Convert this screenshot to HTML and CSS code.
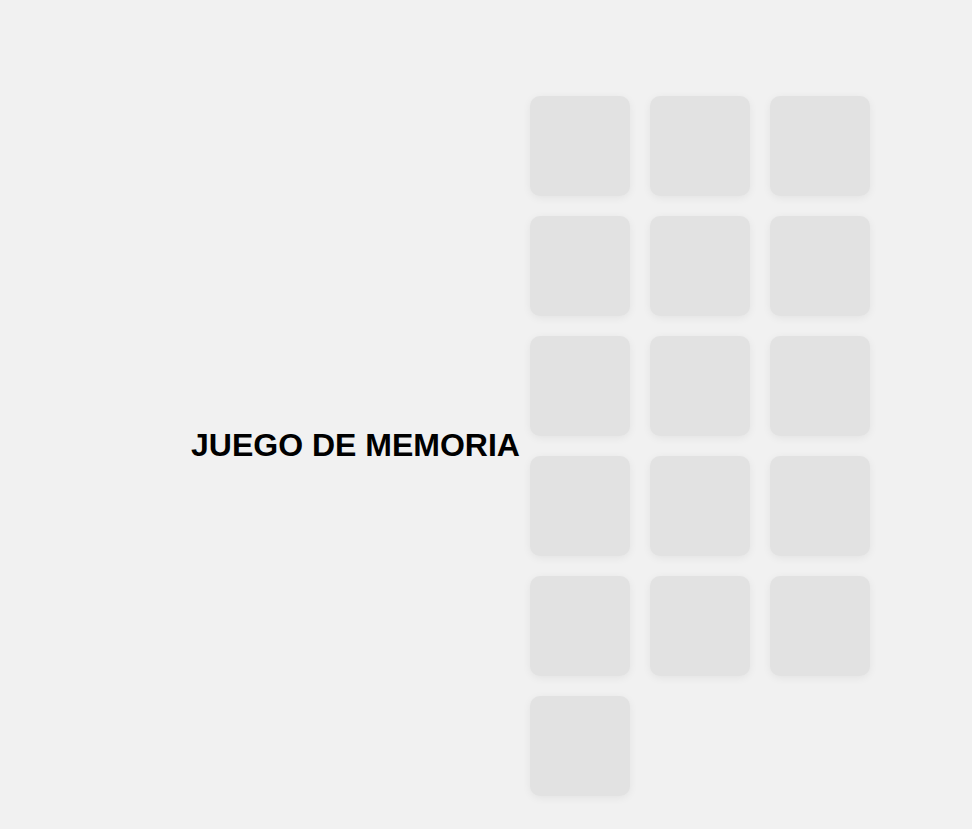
FILE: index.html
```html
<!DOCTYPE html>
<html lang="es">
<head>
<meta charset="utf-8">
<title>Juego de memoria</title>
<link rel="stylesheet" href="styles.css">
</head>
<body>
<main class="page">
  <h1 class="title">JUEGO DE MEMORIA</h1>
  <div class="board">
    <div class="card"></div><div class="card"></div><div class="card"></div>
    <div class="card"></div><div class="card"></div><div class="card"></div>
    <div class="card"></div><div class="card"></div><div class="card"></div>
    <div class="card"></div><div class="card"></div><div class="card"></div>
    <div class="card"></div><div class="card"></div><div class="card"></div>
    <div class="card"></div>
  </div>
</main>
</body>
</html>
```

FILE: styles.css
```css
html, body {
  margin: 0;
  padding: 0;
  background: #f1f1f1;
  font-family: "Liberation Sans", Arial, sans-serif;
}

.page {
  display: flex;
  align-items: center;
  padding: 86px 0 0 191px;
}

.title {
  margin: 0 0 2px 0;
  font-size: 32px;
  font-weight: bold;
  color: #000;
  line-height: 37px;
  white-space: nowrap;
}

.board {
  display: grid;
  grid-template-columns: repeat(3, 100px);
  grid-auto-rows: 100px;
  gap: 20px;
  padding: 10px;
}

.card {
  background: #e2e2e2;
  border-radius: 10px;
  box-shadow: 0 2px 8px rgba(0, 0, 0, 0.06);
}
```
